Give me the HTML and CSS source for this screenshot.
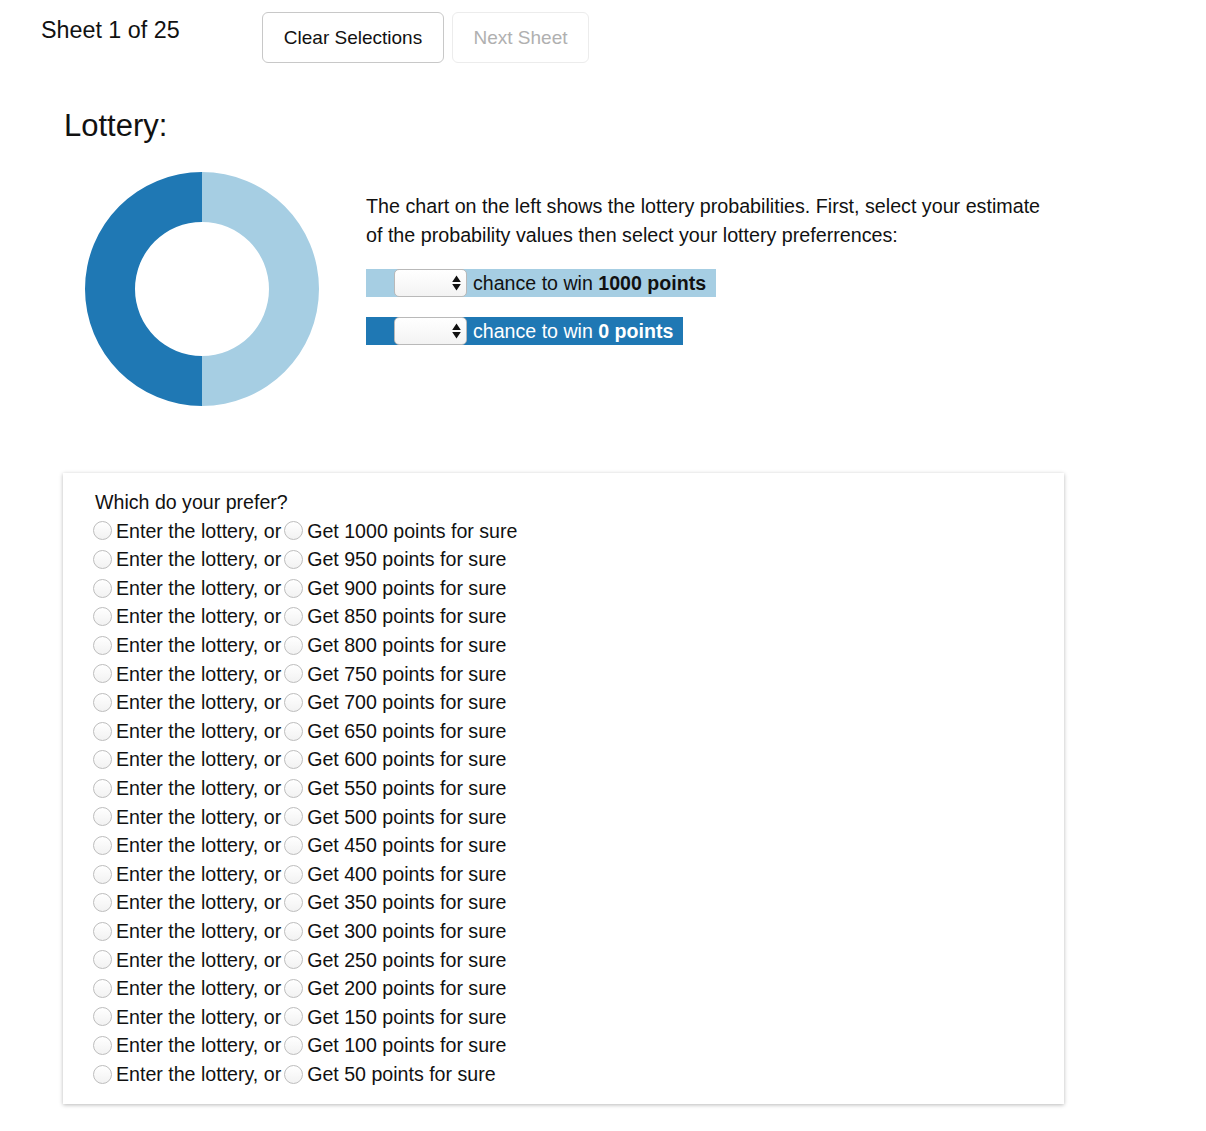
FILE: index.html
```html
<!DOCTYPE html>
<html>
<head>
<meta charset="utf-8">
<link rel="stylesheet" href="styles.css">
</head>
<body>
<div class="header">
  <div class="sheet-count">Sheet 1 of 25</div>
  <button class="btn btn-clear">Clear Selections</button>
  <button class="btn btn-disabled">Next Sheet</button>
</div>
<div class="main">
  <h1 class="title">Lottery:</h1>
  <div class="chart-row">
    <svg class="donut" width="236" height="236" viewBox="0 0 236 236">
      <path d="M118 1 A117 117 0 0 1 118 235 L118 185 A67 67 0 0 0 118 51 Z" fill="#a6cee3"/>
      <path d="M118 235 A117 117 0 0 1 118 1 L118 51 A67 67 0 0 0 118 185 Z" fill="#1f78b4"/>
    </svg>
    <div class="info">
      <p class="desc">The chart on the left shows the lottery probabilities. First, select your estimate of the probability values then select your lottery preferrences:</p>
      <div class="bar bar-light">
        <div class="sel"><svg width="9" height="16" viewBox="0 0 9 16"><path d="M4.5 0.5 L8.8 7 L0.2 7 Z M4.5 15.5 L8.8 9 L0.2 9 Z" fill="#111"/></svg></div>
        <span>chance to win <b>1000 points</b></span>
      </div>
      <div class="bar bar-dark">
        <div class="sel"><svg width="9" height="16" viewBox="0 0 9 16"><path d="M4.5 0.5 L8.8 7 L0.2 7 Z M4.5 15.5 L8.8 9 L0.2 9 Z" fill="#111"/></svg></div>
        <span>chance to win <b>0 points</b></span>
      </div>
    </div>
  </div>
  <div class="card">
    <div class="question">Which do your prefer?</div>
    <div id="rows"></div>
  </div>
</div>
<script src="script.js"></script>
</body>
</html>
```
FILE: script.js
```js
var rows = document.getElementById('rows');
var html = '';
for (var v = 1000; v >= 50; v -= 50) {
  html += '<div class="row"><label class="opt"><span class="radio"></span>Enter the lottery, or</label>' +
          '<label class="opt"><span class="radio"></span>Get ' + v + ' points for sure</label></div>';
}
rows.innerHTML = html;
```
FILE: styles.css
```css
html, body {
  margin: 0;
  padding: 0;
  background: #fff;
}
body {
  font-family: "Liberation Sans", Arial, Helvetica, sans-serif;
  color: #111;
  width: 1206px;
  padding-bottom: 20px;
}
.header {
  display: flex;
  align-items: flex-start;
  padding: 12px 0 0 41px;
}
.sheet-count {
  width: 221px;
  font-size: 23.3px;
  line-height: 26px;
  padding-top: 5px;
}
.btn {
  font-family: "Liberation Sans", Arial, sans-serif;
  font-size: 19px;
  height: 51px;
  padding: 0;
  background: #fff;
  border: 1px solid #c8c8c8;
  border-radius: 6px;
  color: #111;
  margin-right: 8px;
}
.btn-clear { width: 182px; }
.btn-disabled {
  color: #b0b0b0;
  border-color: #ececec;
  width: 137px;
}
.main {
  padding-left: 63px;
}
.title {
  font-size: 31px;
  font-weight: normal;
  margin: 0;
  padding: 45px 0 0 1px;
  line-height: 36px;
}
.chart-row {
  display: flex;
  align-items: flex-start;
  margin-top: 27px;
}
.donut {
  margin-left: 21px;
  display: block;
}
.info {
  margin-left: 46px;
  padding-top: 21px;
}
.desc {
  margin: 0;
  width: 680px;
  font-size: 19.7px;
  line-height: 29px;
}
.bar {
  display: flex;
  align-items: center;
  height: 28px;
  padding-left: 28px;
  font-size: 19.6px;
  box-sizing: border-box;
}
.bar-light {
  background: #a6cee3;
  color: #111;
  margin-top: 19px;
  width: 350px;
}
.bar-dark {
  background: #1f78b4;
  color: #fff;
  margin-top: 20px;
  width: 317px;
}
.sel {
  width: 73px;
  height: 28px;
  box-sizing: border-box;
  background: linear-gradient(#ffffff, #f3f3f3);
  border: 1px solid #b9b9b9;
  border-radius: 5px;
  margin-right: 6px;
  display: flex;
  justify-content: flex-end;
  align-items: center;
  padding-right: 5px;
}
.sel svg { display: block; }
.card {
  margin-top: 66px;
  width: 1001px;
  box-sizing: border-box;
  padding: 15px 0 16px 30px;
  background: #fff;
  box-shadow: 0 1px 4px rgba(0,0,0,0.28);
}
.question, .row {
  font-size: 19.6px;
  line-height: 28.6px;
  height: 28.6px;
}
.question {
  padding-left: 2px;
}
.row {
  display: flex;
  align-items: center;
}
.opt {
  display: inline-flex;
  align-items: center;
  margin-right: 3px;
}
.radio {
  width: 19px;
  height: 19px;
  box-sizing: border-box;
  border: 1px solid #bdbdbd;
  border-radius: 50%;
  background: linear-gradient(#ffffff, #f2f2f2);
  margin-right: 4px;
  display: inline-block;
}
```
